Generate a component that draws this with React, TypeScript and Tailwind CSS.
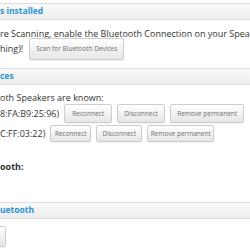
import React from 'react';

const Btn: React.FC<{ children?: React.ReactNode; className?: string; label?: string }> = ({ children, className = '', label }) => (
  <button
    aria-label={label}
    className={`shrink-0 rounded-[2px] border border-[#cccccc] bg-gradient-to-b from-white to-[#e6e6e6] text-[6.5px] text-[#6f6f6f] shadow-[0_1px_1px_rgba(0,0,0,0.05)] ${className}`}
  >
    {children}
  </button>
);

const PanelHeader: React.FC<{ title: string }> = ({ title }) => (
  <div className="flex h-[17px] items-center border-y border-[#dddddd] bg-gradient-to-b from-[#fafafa] to-[#ececec] text-[8.5px] font-bold text-[#2a93d0]">
    {title}
  </div>
);

const DeviceRow: React.FC<{ mac: string; wide?: boolean }> = ({ mac, wide }) => (
  <div className="flex items-center gap-[5px] whitespace-nowrap">
    <span>{mac}</span>
    <Btn className={wide ? 'h-[19px] w-[48px]' : 'h-[17px] w-[41px]'}>Reconnect</Btn>
    <Btn className={wide ? 'h-[19px] w-[48px]' : 'h-[17px] w-[46px]'}>Disconnect</Btn>
    <Btn className={wide ? 'h-[19px] w-[74px]' : 'h-[17px] w-[67px]'}>Remove permanent</Btn>
  </div>
);

export default function App() {
  return (
    <div className="h-[250px] w-[250px] overflow-hidden bg-white font-['Open_Sans',sans-serif] text-[9px] text-[#333]">
      <div className="pt-[3px]">
        <PanelHeader title="s installed" />
        <div className="whitespace-nowrap pt-[8px] leading-[11px]">
          re Scanning, enable the Bluetooth Connection on your Speaker
        </div>
        <div className="-mt-[1px] flex items-center gap-[6px] whitespace-nowrap">
          <span>hing)!</span>
          <Btn className="h-[22px] w-[95px]">Scan for Bluetooth Devices</Btn>
        </div>
        <div className="mt-[8px]">
          <PanelHeader title="ces" />
        </div>
        <div className="whitespace-nowrap pt-[7px] leading-[12px]">oth Speakers are known:</div>
        <DeviceRow mac="8:FA:B9:25:96)" wide />
        <div className="mt-[2px]">
          <DeviceRow mac="C:FF:03:22)" />
        </div>
        <div className="mt-[19px] font-bold leading-[12px]">ooth:</div>
        <div className="mt-[29px]">
          <PanelHeader title="uetooth" />
        </div>
        <div className="mt-[7px]">
          <Btn className="-ml-[2px] h-[21px] w-[8px] rounded-l-none" label="Scan" />
        </div>
      </div>
    </div>
  );
}
